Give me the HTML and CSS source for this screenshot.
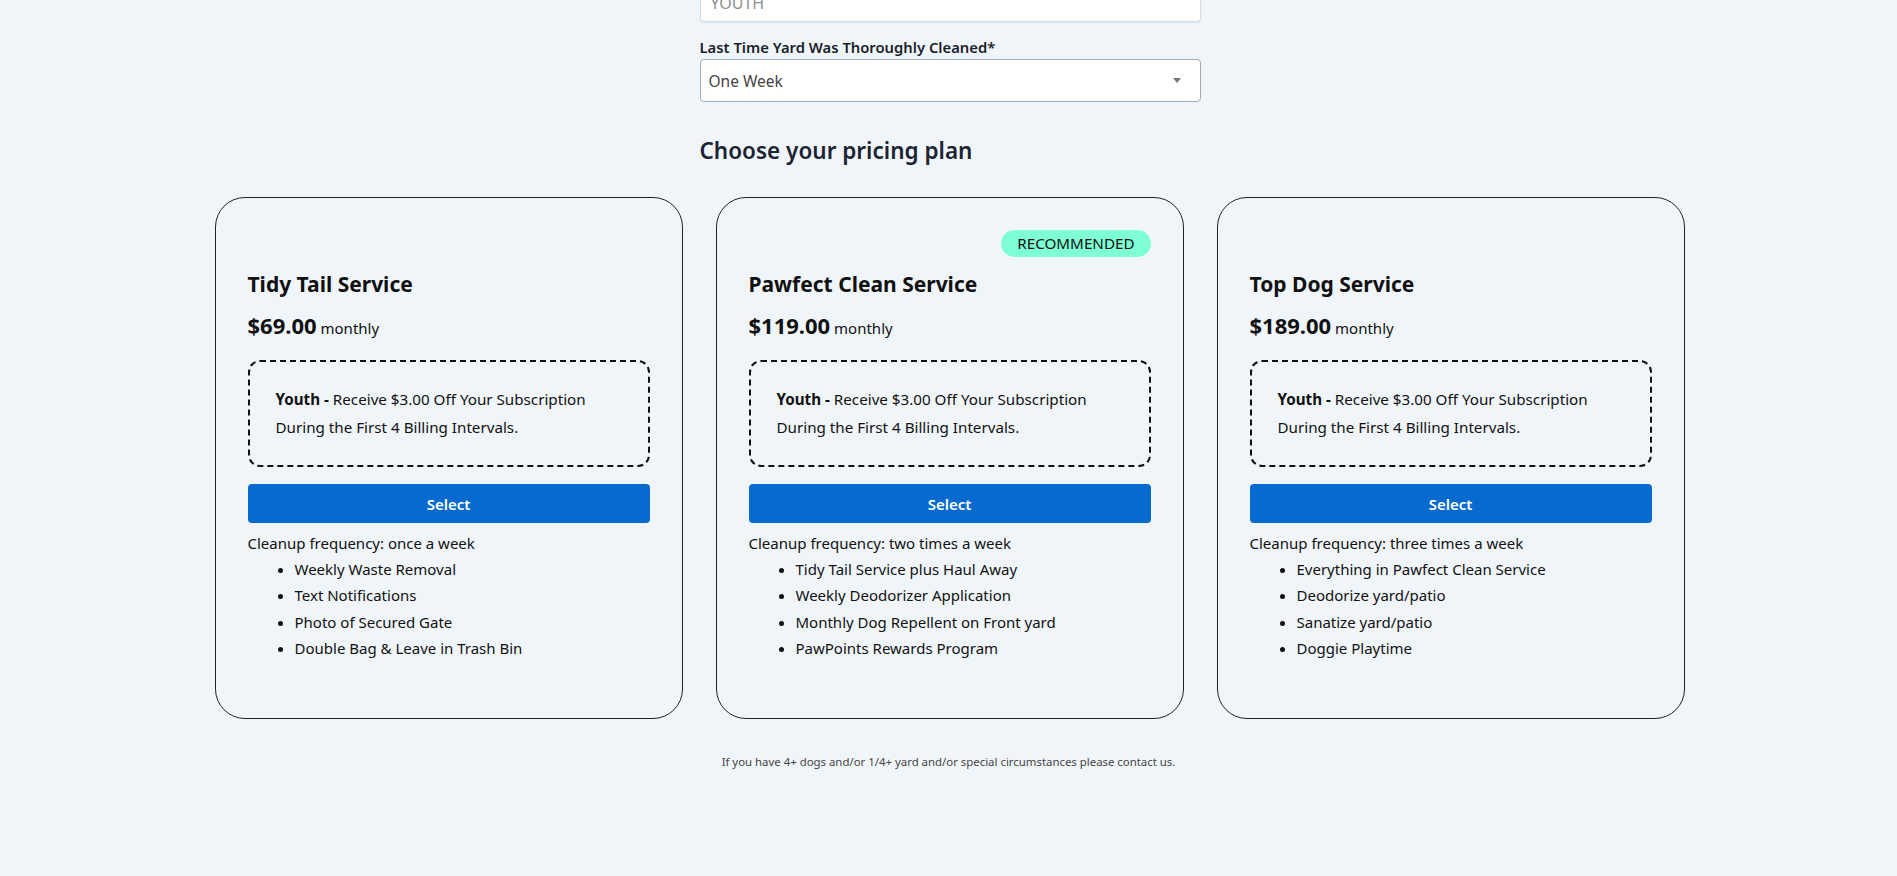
FILE: index.html
```html
<!DOCTYPE html>
<html lang="en">
<head>
  <meta charset="UTF-8">
  <meta name="viewport" content="width=device-width, initial-scale=1.0">
  <title>Choose your pricing plan</title>
  <link rel="stylesheet" href="styles.css">
</head>
<body>
  <div class="page">
    <!-- Formulario -->
    <div class="form-col">
      <div class="field field-cut">
        <input type="text" class="input" value="YOUTH">
      </div>
      <div class="field">
        <label for="lastClean">Last Time Yard Was Thoroughly Cleaned*</label>
        <div class="select-wrap">
          <select id="lastClean" class="select">
            <option>One Week</option>
            <option>Two Weeks</option>
            <option>One Month</option>
          </select>
          <span class="caret"></span>
        </div>
      </div>
      <h2 class="plans-title">Choose your pricing plan</h2>
    </div>

    <!-- Planos -->
    <div class="plans">
      <div class="plan">
        <div class="badge-row"></div>
        <h3>Tidy Tail Service</h3>
        <p class="price"><strong>$69.00</strong> monthly</p>
        <p class="promo"><strong>Youth -</strong> Receive $3.00 Off Your Subscription<br>During the First 4 Billing Intervals.</p>
        <button class="select-btn">Select</button>
        <p class="freq">Cleanup frequency: once a week</p>
        <ul>
          <li>Weekly Waste Removal</li>
          <li>Text Notifications</li>
          <li>Photo of Secured Gate</li>
          <li>Double Bag &amp; Leave in Trash Bin</li>
        </ul>
      </div>

      <div class="plan">
        <div class="badge-row"><span class="badge">RECOMMENDED</span></div>
        <h3>Pawfect Clean Service</h3>
        <p class="price"><strong>$119.00</strong> monthly</p>
        <p class="promo"><strong>Youth -</strong> Receive $3.00 Off Your Subscription<br>During the First 4 Billing Intervals.</p>
        <button class="select-btn">Select</button>
        <p class="freq">Cleanup frequency: two times a week</p>
        <ul>
          <li>Tidy Tail Service plus Haul Away</li>
          <li>Weekly Deodorizer Application</li>
          <li>Monthly Dog Repellent on Front yard</li>
          <li>PawPoints Rewards Program</li>
        </ul>
      </div>

      <div class="plan">
        <div class="badge-row"></div>
        <h3>Top Dog Service</h3>
        <p class="price"><strong>$189.00</strong> monthly</p>
        <p class="promo"><strong>Youth -</strong> Receive $3.00 Off Your Subscription<br>During the First 4 Billing Intervals.</p>
        <button class="select-btn">Select</button>
        <p class="freq">Cleanup frequency: three times a week</p>
        <ul>
          <li>Everything in Pawfect Clean Service</li>
          <li>Deodorize yard/patio</li>
          <li>Sanatize yard/patio</li>
          <li>Doggie Playtime</li>
        </ul>
      </div>
    </div>

    <p class="note">If you have 4+ dogs and/or 1/4+ yard and/or special circumstances please contact us.</p>
  </div>
</body>
</html>
```

FILE: styles.css
```css
body {
  font-family: "Noto Sans", "Open Sans", sans-serif;
  margin: 0;
  background-color: #f0f5f9;
  color: #111;
}
.page {
  overflow: hidden;
  height: 876px;
}
.form-col {
  width: 501px;
  margin: 0 auto;
  padding-left: 3px;
}
.field-cut {
  margin-top: -16px;
}
.input {
  box-sizing: border-box;
  width: 100%;
  height: 38px;
  padding: 0 10px;
  border: 1px solid #d6dbe0;
  border-radius: 4px;
  background: white;
  box-shadow: 0 1px 2px rgba(0, 0, 0, 0.08);
  font-family: inherit;
  font-size: 16px;
  color: #8a8f96;
}
.field label {
  display: block;
  margin-top: 15px;
  margin-bottom: 2px;
  font-size: 14.8px;
  font-weight: 600;
  color: #1a1f2b;
}
.select-wrap {
  position: relative;
}
.select {
  box-sizing: border-box;
  width: 100%;
  height: 43px;
  padding: 0 8px;
  border: 1px solid #a6abb1;
  border-radius: 4px;
  background: white;
  font-family: inherit;
  font-size: 15.5px;
  color: #444;
  appearance: none;
}
.caret {
  position: absolute;
  right: 20px;
  top: 19px;
  border-left: 4px solid transparent;
  border-right: 4px solid transparent;
  border-top: 5px solid #777;
}
.plans-title {
  margin: 32px 0 0;
  font-size: 22.5px;
  line-height: 34px;
  font-weight: 600;
  color: #1c2434;
}
.plans {
  display: grid;
  grid-template-columns: repeat(3, 468px);
  gap: 33px;
  justify-content: center;
  margin-top: 29px;
  padding-left: 2px;
}
.plan {
  border: 1px solid #222;
  border-radius: 30px;
  padding: 32px 32px 57px;
}
.badge-row {
  display: flex;
  justify-content: flex-end;
  height: 27px;
}
.badge {
  background-color: #7fffd4;
  border-radius: 14px;
  padding: 0 16px;
  font-size: 15.2px;
  line-height: 27px;
  color: #111;
}
.plan h3 {
  margin: 12px 0 0;
  font-size: 21px;
  line-height: 30px;
  font-weight: 700;
}
.price {
  margin: 11px 0 0;
  font-size: 15px;
  line-height: 30px;
}
.price strong {
  font-size: 22px;
}
.promo {
  margin: 17px 0 0;
  border: 2px dashed #111;
  border-radius: 12px;
  padding: 23px 40px 24px 26px;
  font-size: 15.2px;
  line-height: 28px;
}
.select-btn {
  display: block;
  width: 100%;
  height: 39px;
  margin-top: 17px;
  border: none;
  border-radius: 4px;
  background-color: #066acf;
  color: white;
  font-family: inherit;
  font-size: 15px;
  font-weight: 600;
  cursor: pointer;
}
.select-btn:hover {
  background-color: #0559ad;
}
.freq {
  margin: 7px 0 0;
  font-size: 15px;
  line-height: 26px;
}
.plan ul {
  margin: 0;
  padding-left: 47px;
  font-size: 15px;
  line-height: 26.3px;
}
.note {
  margin: 35px 0 0;
  text-align: center;
  font-size: 11.4px;
  color: #444;
}
```
